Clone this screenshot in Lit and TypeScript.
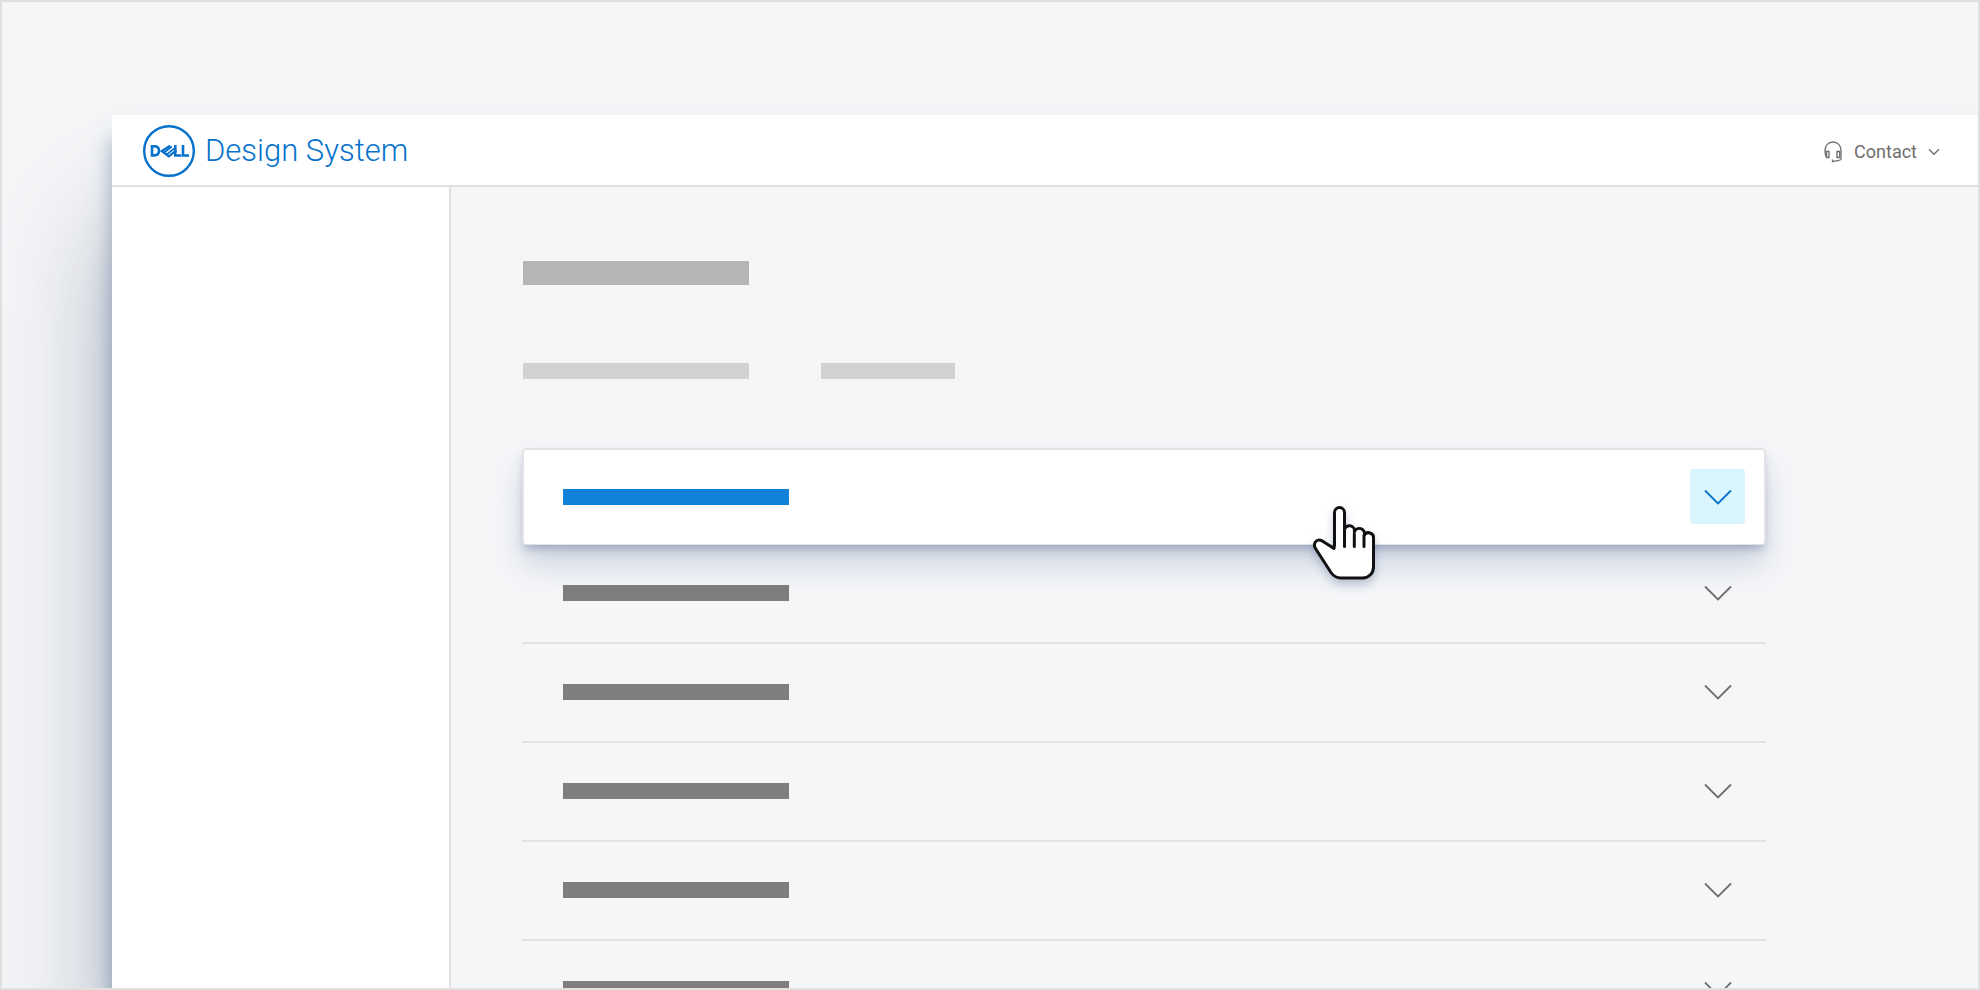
import { LitElement, html, css, svg } from "lit";
import { customElement, property, state } from "lit/decorators.js";

const chevron = svg`<path d="M1 1.5 14 14.500 27 1.5" />`;

@customElement("accordion-row")
class AccordionRow extends LitElement {
  @property({ type: Boolean, reflect: true }) active = false;
  @property() label = "";
  @state() private open = false;

  static styles = css`
    :host {
      display: block;
      box-sizing: border-box;
      border-bottom: 2px solid #e2e3e5;
    }
    :host([active]) {
      position: relative;
      border: 2px solid #e2e3e5;
      border-bottom-width: 1px;
      border-radius: 4px;
      background: #fff;
      box-shadow: 0 6px 8px -2px rgba(64, 88, 136, 0.34), 0 20px 32px -2px rgba(64, 88, 136, 0.24);
    }
    .row {
      display: flex;
      align-items: center;
      justify-content: space-between;
      width: 100%;
      height: 97px;
      padding: 0 21px 1px 41px;
      border: 0;
      background: none;
      cursor: pointer;
    }
    :host([active]) .row {
      height: 94px;
      padding: 0 19px 1px 39px;
    }
    .bar {
      width: 226px;
      height: 16px;
      background: #7e7e7e;
    }
    :host([active]) .bar {
      background: #1282d9;
    }
    .toggle {
      display: grid;
      place-items: center;
      width: 55px;
      height: 55px;
      border-radius: 3px;
    }
    :host([active]) .toggle {
      background: #d9f5fd;
    }
    svg {
      width: 28px;
      height: 16px;
      fill: none;
      stroke: #6e6e6e;
      stroke-width: 1.8;
    }
    :host([active]) svg {
      stroke: #0672cb;
    }
  `;

  render() {
    return html`<button
      class="row"
      aria-label=${this.label}
      aria-expanded=${this.open ? "true" : "false"}
      @click=${() => (this.open = !this.open)}
    >
      <span class="bar"></span>
      <span class="toggle"><svg viewBox="0 0 28 16">${chevron}</svg></span>
    </button>`;
  }
}

@customElement("app-root")
class AppRoot extends LitElement {
  static styles = css`
    :host {
      display: block;
      font-family: Roboto, "Liberation Sans", sans-serif;
    }
    * {
      box-sizing: border-box;
    }
    .frame {
      display: flex;
      height: 100vh;
      padding: 113px 0 0 110px;
      border: 2px solid #e0e0e0;
      background: #f5f6f8;
      overflow: hidden;
    }
    .window {
      display: flex;
      flex: 1;
      flex-direction: column;
      min-width: 0;
      background: #f5f6f8;
      box-shadow: 0 24px 20px rgba(70, 100, 135, 0.5), 0 110px 110px rgba(80, 95, 125, 0.46);
    }
    header {
      display: flex;
      flex: none;
      align-items: center;
      justify-content: space-between;
      height: 72px;
      padding: 2px 38px 0 31px;
      border-bottom: 2px solid #e0e0e0;
      background: #fff;
    }
    .brand {
      display: flex;
      align-items: center;
      gap: 10px;
      color: #0672cb;
      font-size: 31px;
      font-weight: 300;
      line-height: 40px;
      text-decoration: none;
    }
    .logo {
      width: 52px;
      height: 52px;
    }
    .contact {
      display: flex;
      align-items: center;
      padding: 1px 0 0;
      border: 0;
      background: none;
      color: #6e6e6e;
      font-family: inherit;
      font-size: 18px;
      line-height: 24px;
      gap: 11px;
      cursor: pointer;
    }
    .contact svg {
      fill: none;
      stroke: #6e6e6e;
      stroke-width: 1.3;
    }
    .headset {
      width: 19px;
      height: 22px;
    }
    .caret {
      width: 12px;
      height: 8px;
    }
    .body {
      display: flex;
      flex: 1;
      min-height: 0;
    }
    aside {
      flex: none;
      width: 339px;
      border-right: 2px solid #e0e0e0;
      background: #fff;
    }
    main {
      flex: 1;
      min-width: 0;
      padding: 74px 212px 0 71px;
    }
    .title {
      width: 226px;
      height: 24px;
      margin-left: 1px;
      background: #b5b5b5;
    }
    .meta {
      display: flex;
      gap: 72px;
      margin: 78px 0 69px 1px;
    }
    .meta span {
      width: 134px;
      height: 16px;
      background: #d1d1d1;
    }
    .meta .wide {
      width: 226px;
    }
    .pointer {
      position: absolute;
      left: 1312px;
      top: 504px;
      width: 65px;
      height: 78px;
      filter: drop-shadow(0 5px 5px rgba(50, 76, 125, 0.3));
      pointer-events: none;
    }
  `;

  render() {
    return html`
      <div class="frame">
        <div class="window">
          <header>
            <a class="brand" href="#">
              <svg class="logo" viewBox="0 0 52 52" aria-label="Dell" role="img" fill="none" stroke="#0672cb">
                <circle cx="26" cy="26" r="24.8" stroke-width="2.4" />
                <path d="M9 21.200h2.200c3 0 4.800 1.700 4.800 4.600s-1.800 4.600-4.800 4.600H9z" stroke-width="2.600" />
                <path d="M27.200 20.800 18.800 26l7 5.300 7.600-5.900" stroke-width="2.300" />
                <path d="M20.800 27.700 28.900 21.500M23.300 29.700 31.400 23.400" stroke-width="1.800" />
                <path d="M32.300 20v10.500h6M40 20v10.500h6" stroke-width="2.600" />
              </svg>
              <span>Design System</span>
            </a>
            <button class="contact">
              <svg class="headset" viewBox="0 0 19 22">
                <path d="M2.300 16.300C1.300 14.500 1 12 1 9.500 1 4.500 4.300 1 9 1s8 3.500 8 8.500v8.500c0 1.300-5 2.500-8.500 2.500V18.500" />
                <path d="M2.300 10.500h2.700v6H2.800zM15.700 10.500H13v6h2.700z" />
              </svg>
              <span>Contact</span>
              <svg class="caret" viewBox="0 0 12 8"><path d="M1 1.300 6 6.300 11 1.300" /></svg>
            </button>
          </header>
          <div class="body">
            <aside></aside>
            <main>
              <div class="title"></div>
              <div class="meta"><span class="wide"></span><span></span></div>
              ${[1, 2, 3, 4, 5, 6].map(
                (n) => html`<accordion-row label="Section ${n}" ?active=${n === 1}></accordion-row>`
              )}
            </main>
          </div>
        </div>
      </div>
      <svg class="pointer" viewBox="0 0 65 78" fill="#fff" stroke="#111" stroke-width="3" stroke-linecap="round" stroke-linejoin="round">
        <path d="M22.500 41V8.500a5 5 0 0 1 10 0V25.500a5 5 0 0 1 9.800 2.500a5 5 0 0 1 9.900 3.200a5 5 0 0 1 9.300 3V63c0 6-4.500 11-11 11H29c-4.500 0-7.500-2-10-5.500L3.500 44.500c-3-5 1-10 6-8L22 44.500z" />
        <path d="M32.500 26v16.500M42.300 30v12.500M52 32v10.500" fill="none" />
      </svg>
    `;
  }
}
